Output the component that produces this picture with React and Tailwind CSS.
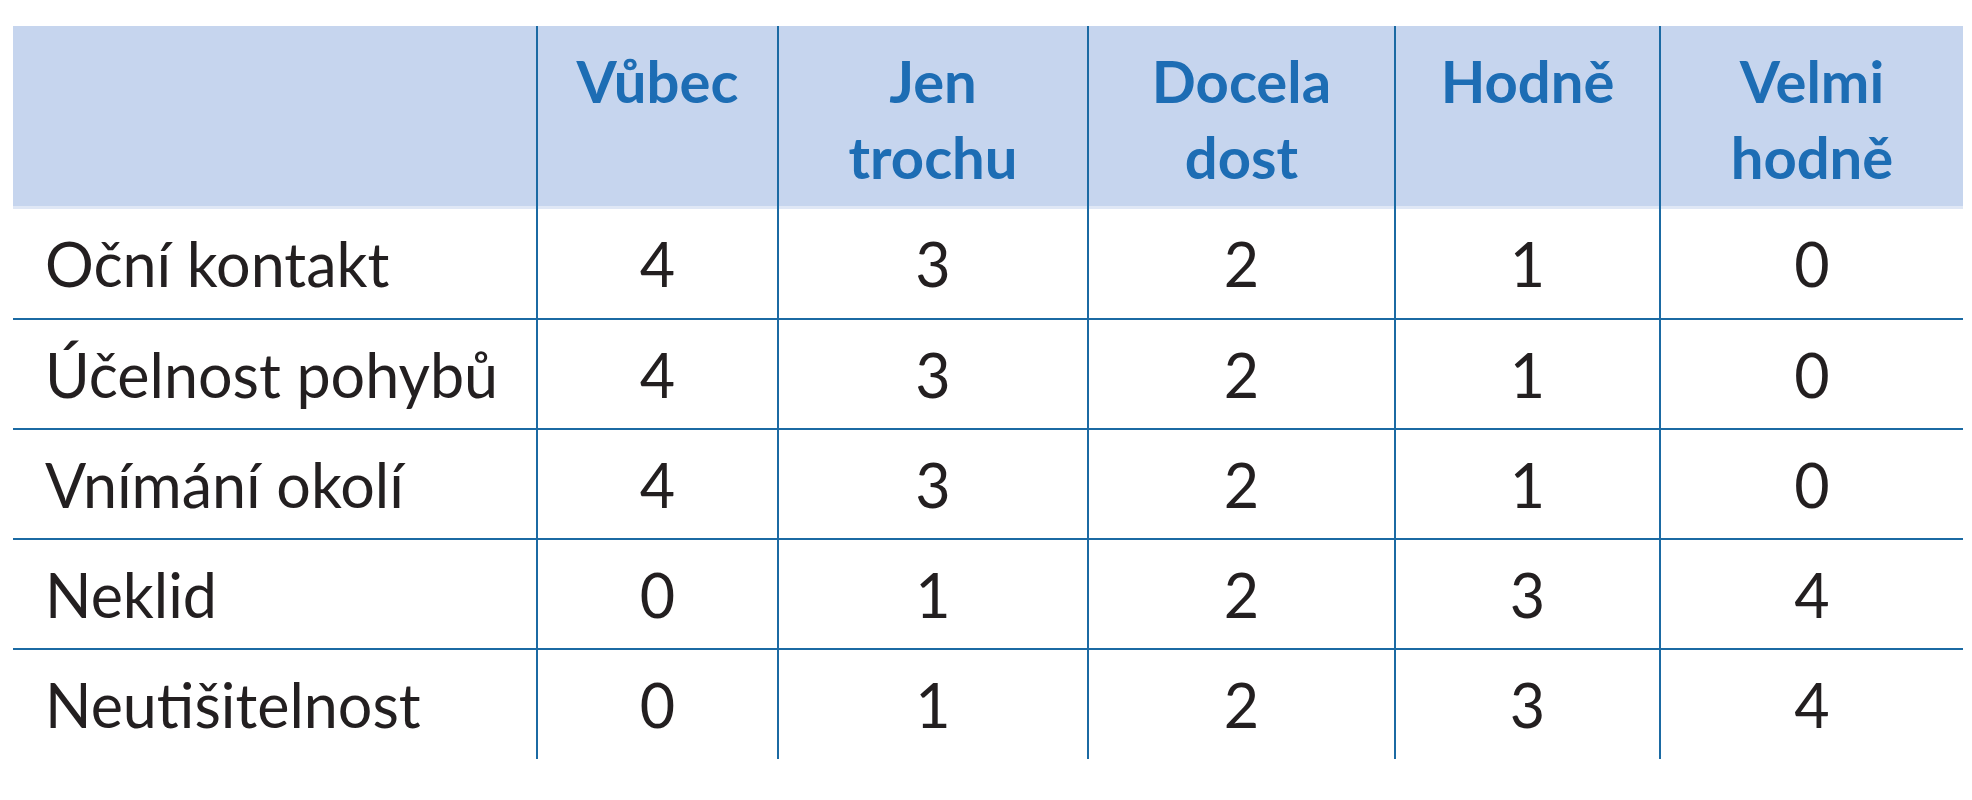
const COLUMNS = ["Vůbec", "Jen trochu", "Docela dost", "Hodně", "Velmi hodně"];

const ROWS = [
  { label: "Oční kontakt", scores: [4, 3, 2, 1, 0] },
  { label: "Účelnost pohybů", scores: [4, 3, 2, 1, 0] },
  { label: "Vnímání okolí", scores: [4, 3, 2, 1, 0] },
  { label: "Neklid", scores: [0, 1, 2, 3, 4] },
  { label: "Neutišitelnost", scores: [0, 1, 2, 3, 4] },
];

const HEAD_CELL =
  "h-[183px] border-l-2 border-[#1b6aa3] px-4 pt-[17px] align-top text-center text-[58px] font-bold leading-[76px] text-[#1d6db4]";

export default function App() {
  return (
    <div className="min-h-[800px] w-[1972px] bg-white pt-[26px] pl-[13px] font-['Lato',sans-serif]">
      <table className="w-[1950px] table-fixed border-collapse">
        <colgroup>
          <col className="w-[524px]" />
          <col className="w-[241px]" />
          <col className="w-[310px]" />
          <col className="w-[307px]" />
          <col className="w-[265px]" />
          <col className="w-[303px]" />
        </colgroup>
        <thead>
          <tr className="bg-[#c6d5ee] shadow-[inset_0_-3px_0_#dfe7f5]">
            <th className="h-[183px] p-0" />
            {COLUMNS.map((col) => (
              <th key={col} className={HEAD_CELL}>
                {col.split(" ").map((word) => (
                  <span key={word} className="block">
                    {word}
                  </span>
                ))}
              </th>
            ))}
          </tr>
        </thead>
        <tbody>
          {ROWS.map((row, i) => (
            <tr key={row.label} className={i > 0 ? "border-t-2 border-[#1b6aa3]" : ""}>
              <td className="h-[110px] pl-[32px] align-middle text-[61px] leading-none text-[#231f20]">
                {row.label}
              </td>
              {row.scores.map((score, j) => (
                <td
                  key={j}
                  className="h-[110px] border-l-2 border-[#1b6aa3] text-center align-middle text-[61px] leading-none text-[#231f20]"
                >
                  {score}
                </td>
              ))}
            </tr>
          ))}
        </tbody>
      </table>
    </div>
  );
}
